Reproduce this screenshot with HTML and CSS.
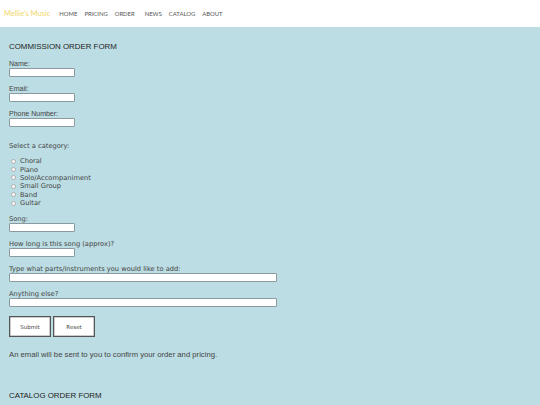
FILE: index.html
```html
<!DOCTYPE html>
<html>
<head>
<meta charset="utf-8">
<link rel="stylesheet" href="styles.css">
</head>
<body>
<header class="topbar">
  <span class="logo">Mellie's Music</span>
  <nav class="nav">
    <a>HOME</a><a>PRICING</a><a>ORDER</a><a class="news">NEWS</a><a>CATALOG</a><a>ABOUT</a>
  </nav>
</header>
<main class="page">
  <h2 class="form-title">COMMISSION ORDER FORM</h2>
  <form class="form">
    <div class="field"><label class="lbl">Name:</label><input class="txt" type="text"></div>
    <div class="field"><label class="lbl">Email:</label><input class="txt" type="text"></div>
    <div class="field"><label class="lbl">Phone Number:</label><input class="txt" type="text"></div>
    <p class="lbl cat">Select a category:</p>
    <div class="radios">
      <label class="radio"><input type="radio" name="c"><span>Choral</span></label>
      <label class="radio"><input type="radio" name="c"><span>Piano</span></label>
      <label class="radio"><input type="radio" name="c"><span>Solo/Accompaniment</span></label>
      <label class="radio"><input type="radio" name="c"><span>Small Group</span></label>
      <label class="radio"><input type="radio" name="c"><span>Band</span></label>
      <label class="radio"><input type="radio" name="c"><span>Guitar</span></label>
    </div>
    <div class="field"><label class="lbl alt">Song:</label><input class="txt" type="text"></div>
    <div class="field"><label class="lbl alt">How long is this song (approx)?</label><input class="txt" type="text"></div>
    <div class="field"><label class="lbl alt">Type what parts/instruments you would like to add:</label><input class="txt wide" type="text"></div>
    <div class="field"><label class="lbl alt">Anything else?</label><input class="txt wide" type="text"></div>
    <div class="buttons">
      <button type="button" class="btn">Submit</button>
      <button type="button" class="btn">Reset</button>
    </div>
  </form>
  <p class="note">An email will be sent to you to confirm your order and pricing.</p>
  <h2 class="form-title second">CATALOG ORDER FORM</h2>
</main>
</body>
</html>
```

FILE: styles.css
```css
html, body {
  margin: 0;
  padding: 0;
  height: 100%;
}
body {
  background: #bcdde3;
  font-family: "Liberation Sans", Arial, sans-serif;
  color: #333;
}
.topbar {
  background: #fff;
  height: 27px;
  display: flex;
  align-items: center;
  padding-left: 4px;
  box-sizing: border-box;
}
.logo {
  font-family: Lato, sans-serif;
  font-size: 7.5px;
  color: #f2d86a;
  margin-right: 9px;
}
.nav {
  display: flex;
  gap: 7px;
}
.nav a {
  font-family: Lato, sans-serif;
  font-size: 5.9px;
  color: #555;
}
.nav .news { margin-left: 3px; }
.page {
  padding: 0 9px;
}
.form-title {
  margin: 0;
  padding-top: 15px;
  font-size: 7.9px;
  line-height: 10px;
  font-weight: normal;
  color: #222;
}
.form {
  margin-top: 8px;
}
.field {
  margin-bottom: 8px;
}
.lbl {
  display: block;
  font-size: 7px;
  line-height: 8px;
  color: #444;
  margin: 0;
}
.alt, .cat, .radio {
  font-family: "DejaVu Sans", sans-serif;
  font-size: 6.7px;
}
.cat {
  margin-top: 15px;
  line-height: 8px;
}
.txt {
  display: block;
  box-sizing: border-box;
  width: 66px;
  height: 9px;
  margin: 0;
  padding: 0;
  border: 1px solid #8a9a9e;
  border-radius: 1px;
  background: #fff;
}
.txt.wide { width: 268px; }
.radios {
  margin-top: 7px;
  margin-bottom: 8px;
  padding-left: 2px;
}
.radio {
  display: flex;
  align-items: center;
  height: 8.4px;
  color: #444;
}
.radio input {
  appearance: none;
  -webkit-appearance: none;
  width: 5px;
  height: 5px;
  margin: 0 4px 0 0;
  border: 1px solid #aaa;
  border-radius: 50%;
  background: #fff;
  box-sizing: border-box;
}
.buttons {
  display: flex;
  gap: 2px;
  padding-top: 1px;
}
.btn {
  width: 42px;
  height: 21px;
  box-sizing: border-box;
  background: #fff;
  border: 1px solid #555;
  box-shadow: inset 0 0 0 0.5px #999;
  font-family: "DejaVu Sans", sans-serif;
  font-size: 5.5px;
  color: #444;
  padding: 0;
}
.note {
  margin: 14px 0 0;
  font-size: 7.7px;
  line-height: 8px;
  color: #444;
}
.second {
  padding-top: 32px;
}
```
